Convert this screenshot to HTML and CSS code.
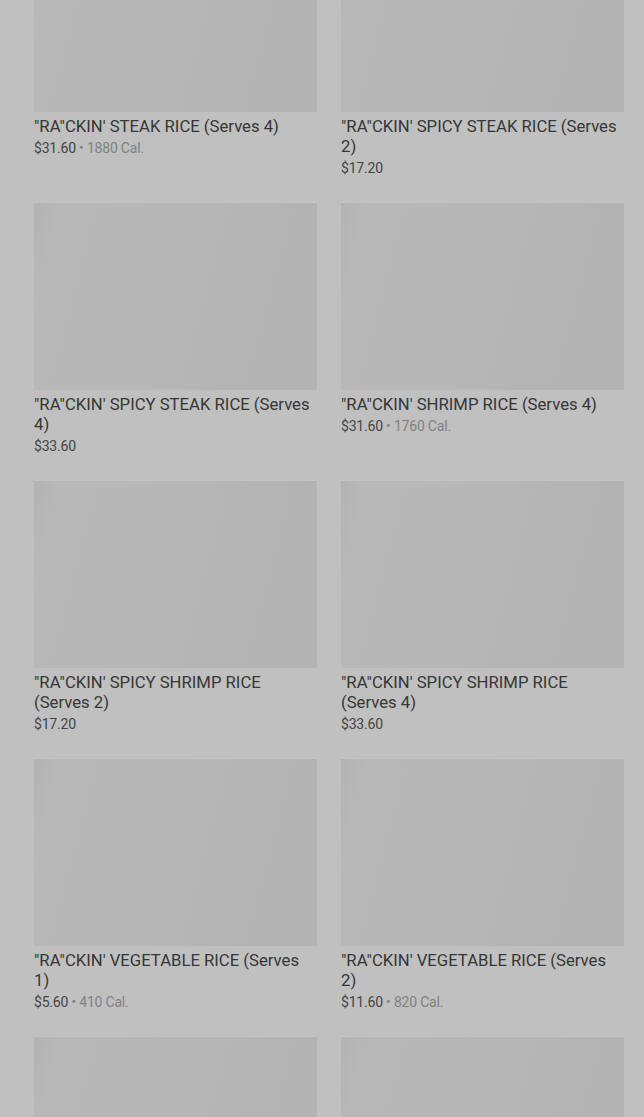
FILE: index.html
```html
<!DOCTYPE html>
<html lang="en">
<head>
    <meta charset="UTF-8">
    <meta name="viewport" content="width=device-width, initial-scale=1.0">
    <title>Rice Menu</title>
    <link rel="stylesheet" href="styles.css">
</head>
<body>
    <main class="menu">
        <div class="menu-grid">
            <div class="item">
                <div class="item-image"></div>
                <h3 class="item-title">"RA"CKIN' STEAK RICE (Serves 4)</h3>
                <p class="item-meta"><span class="price">$31.60</span> • 1880 Cal.</p>
            </div>
            <div class="item">
                <div class="item-image"></div>
                <h3 class="item-title">"RA"CKIN' SPICY STEAK RICE (Serves 2)</h3>
                <p class="item-meta"><span class="price">$17.20</span></p>
            </div>
            <div class="item">
                <div class="item-image"></div>
                <h3 class="item-title">"RA"CKIN' SPICY STEAK RICE (Serves 4)</h3>
                <p class="item-meta"><span class="price">$33.60</span></p>
            </div>
            <div class="item">
                <div class="item-image"></div>
                <h3 class="item-title">"RA"CKIN' SHRIMP RICE (Serves 4)</h3>
                <p class="item-meta"><span class="price">$31.60</span> • 1760 Cal.</p>
            </div>
            <div class="item">
                <div class="item-image"></div>
                <h3 class="item-title">"RA"CKIN' SPICY SHRIMP RICE (Serves 2)</h3>
                <p class="item-meta"><span class="price">$17.20</span></p>
            </div>
            <div class="item">
                <div class="item-image"></div>
                <h3 class="item-title">"RA"CKIN' SPICY SHRIMP RICE (Serves 4)</h3>
                <p class="item-meta"><span class="price">$33.60</span></p>
            </div>
            <div class="item">
                <div class="item-image"></div>
                <h3 class="item-title">"RA"CKIN' VEGETABLE RICE (Serves 1)</h3>
                <p class="item-meta"><span class="price">$5.60</span> • 410 Cal.</p>
            </div>
            <div class="item">
                <div class="item-image"></div>
                <h3 class="item-title">"RA"CKIN' VEGETABLE RICE (Serves 2)</h3>
                <p class="item-meta"><span class="price">$11.60</span> • 820 Cal.</p>
            </div>
            <div class="item">
                <div class="item-image"></div>
            </div>
            <div class="item">
                <div class="item-image"></div>
            </div>
        </div>
    </main>
</body>
</html>
```

FILE: styles.css
```css
body {
    margin: 0;
    padding: 0;
    background-color: #c0c0c0;
    font-family: Roboto, "Noto Sans", sans-serif;
    color: #3b3b3b;
    overflow: hidden;
    height: 1117px;
}
.menu {
    padding: 0 20px 0 34px;
    margin-top: -75px;
}
.menu-grid {
    display: grid;
    grid-template-columns: 283px 283px;
    grid-auto-rows: 253px;
    column-gap: 24px;
    row-gap: 25px;
}
.item-image {
    height: 187px;
    background: linear-gradient(105deg, #b3b3b3 0%, #b8b8b8 8%, #b7b7b7 45%, #b3b3b3 80%, #b3b3b3 100%);
    box-shadow: 0 -1px 0 #c4c4c4;
}
.item-title {
    margin: 5px 0 1px;
    font-size: 16.7px;
    line-height: 20px;
    font-weight: 400;
    color: #363636;
}
.item-meta {
    margin: 0;
    font-size: 14px;
    line-height: 20px;
    color: #808080;
    letter-spacing: -0.2px;
}
.item-meta .price {
    color: #444;
}
```
